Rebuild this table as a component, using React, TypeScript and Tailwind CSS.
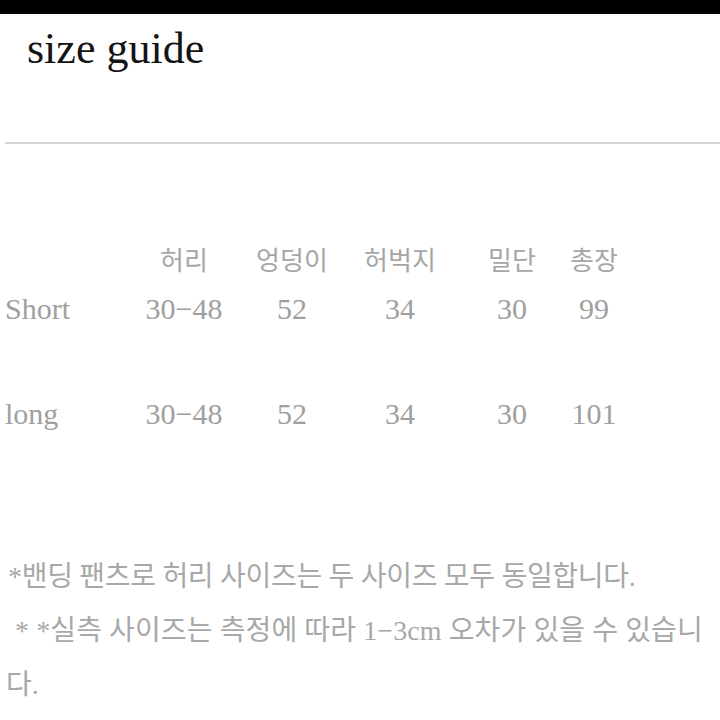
const cols = "grid grid-cols-[140px_88px_128px_88px_136px_28px] justify-items-center items-center";

const rows = [
  { label: "Short", values: ["30−48", "52", "34", "30", "99"], gap: "" },
  { label: "long", values: ["30−48", "52", "34", "30", "101"], gap: "mt-[55px]" },
];

export default function App() {
  return (
    <div className="w-[720px] h-[720px] overflow-hidden bg-white">
      <div className="h-[14px] bg-black" />

      <h1 className="mt-[13px] pl-[27px] text-[44px] leading-none text-[#141414] font-['Liberation_Serif',serif]">
        size guide
      </h1>

      <div className="mt-[71px] ml-[5px] h-[2px] bg-[#d6d6d6]" />

      <section className="mt-[89px] font-['Liberation_Serif','Noto_Sans_CJK_KR',serif] text-[#a0a0a0]">
        <div className={`${cols} h-[50px] text-[26px] font-['Noto_Sans_CJK_KR',sans-serif] text-[#a6a6a6]`}>
          <span />
          <span>허리</span>
          <span className="whitespace-nowrap">엉덩이</span>
          <span className="whitespace-nowrap">허벅지</span>
          <span>밀단</span>
          <span className="whitespace-nowrap">총장</span>
        </div>
        {rows.map((row) => (
          <div key={row.label} className={`${cols} h-[50px] text-[30px] ${row.gap}`}>
            <span className="justify-self-start pl-[5px]">{row.label}</span>
            {row.values.map((v, i) => (
              <span key={i} className="whitespace-nowrap">{v}</span>
            ))}
          </div>
        ))}
      </section>

      <div className="mt-[112px] text-[28px] leading-[54px] text-[#a8a8a8] font-['Liberation_Serif','Noto_Sans_CJK_KR',serif] whitespace-nowrap">
        <p className="pl-[8px] tracking-[-0.3px]">*밴딩 팬츠로 허리 사이즈는 두 사이즈 모두 동일합니다.</p>
        <p className="pl-[15px] tracking-[0.1px]">* *실측 사이즈는 측정에 따라 1−3cm 오차가 있을 수 있습니</p>
        <p className="pl-[6px]">다.</p>
      </div>
    </div>
  );
}
